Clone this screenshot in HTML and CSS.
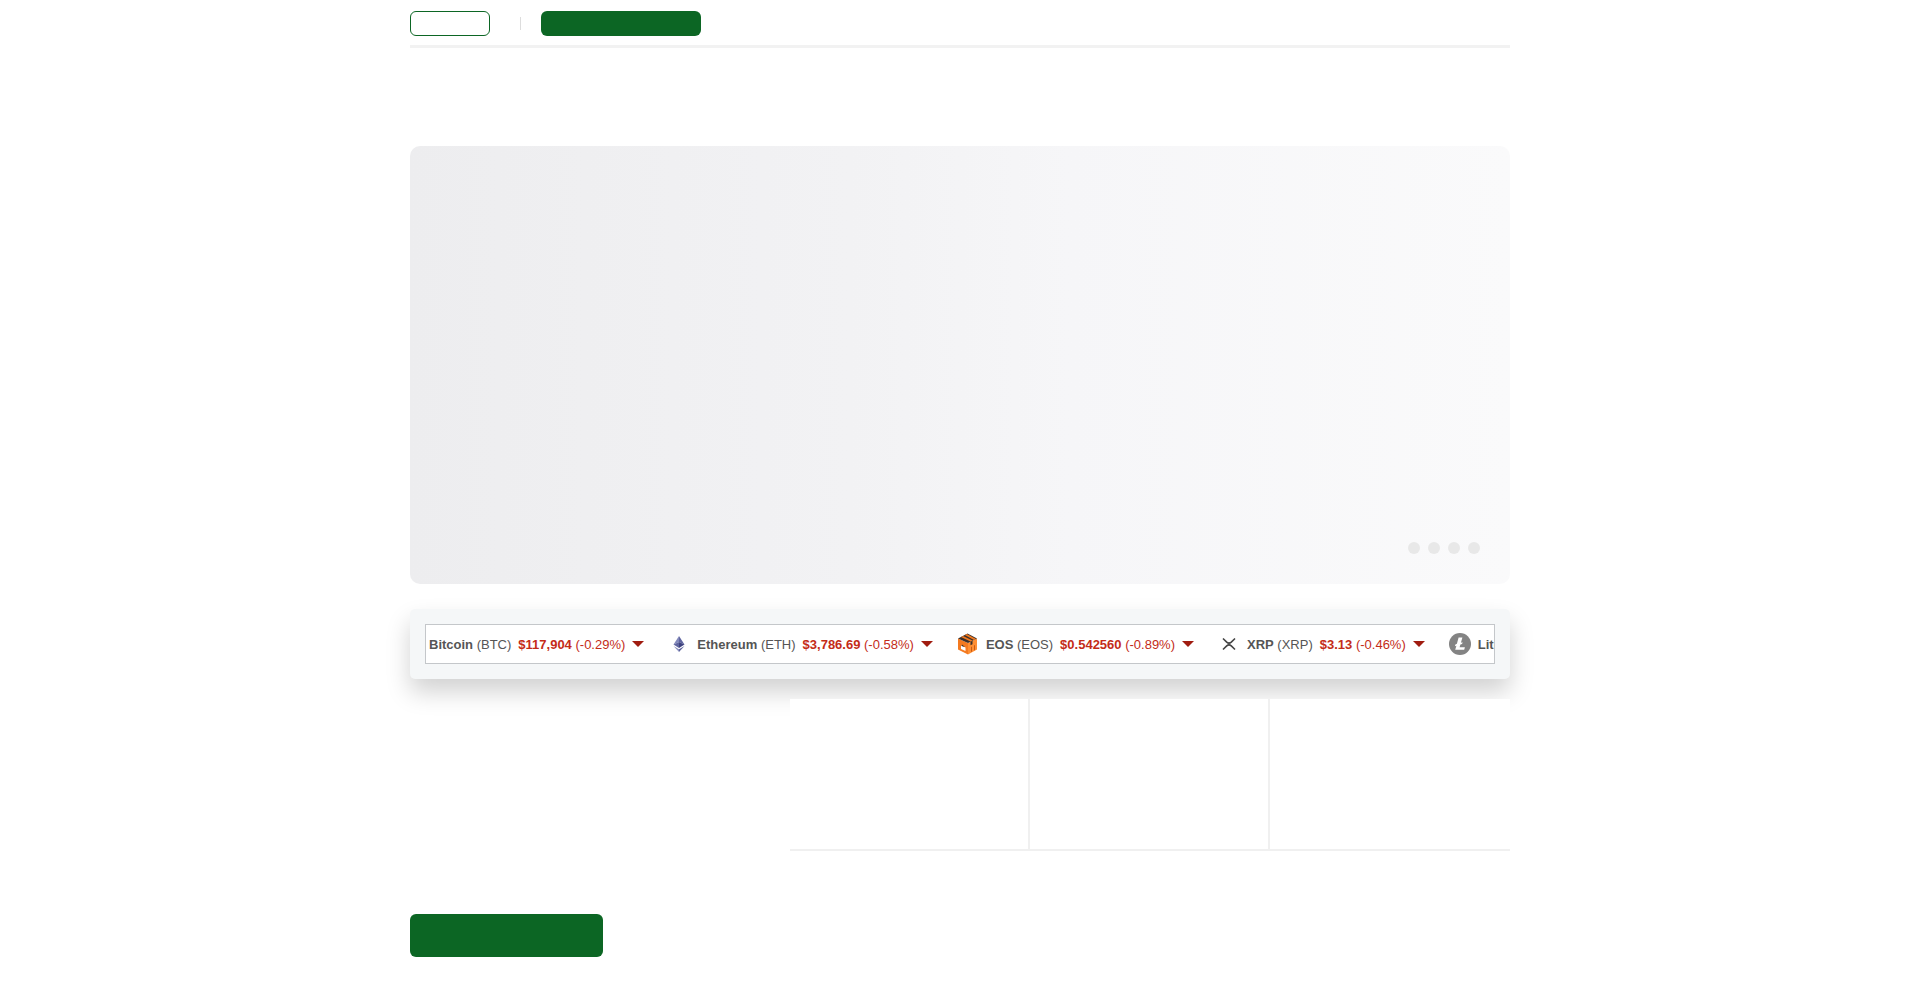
FILE: index.html
```html
<!DOCTYPE html>
<html lang="en">
<head>
  <meta charset="UTF-8">
  <meta name="viewport" content="width=device-width, initial-scale=1.0">
  <title>Crypto Market</title>
  <link rel="stylesheet" href="styles.css">
</head>
<body>
  <div class="container">
    <header class="header">
      <button class="btn btn-login" aria-label="Log in"></button>
      <span class="divider"></span>
      <button class="btn btn-signup" aria-label="Create account"></button>
    </header>

    <section class="hero">
      <div class="dots">
        <button class="dot" aria-label="Slide 1"></button>
        <button class="dot" aria-label="Slide 2"></button>
        <button class="dot" aria-label="Slide 3"></button>
        <button class="dot" aria-label="Slide 4"></button>
      </div>
    </section>

    <section class="ticker">
      <div class="ticker-track">
        <div class="coin">
          <span class="name"><b>Bitcoin</b> (BTC)</span>
          <span class="price"><b>$117,904</b> (-0.29%)</span>
          <span class="arrow"></span>
        </div>
        <div class="coin">
          <svg class="icon" viewBox="0 0 22 22">
            <path fill="#8288bb" d="M11 3 5.500 11.500 11 9z"/>
            <path fill="#5f659f" d="M11 3l5.500 8.500L11 9z"/>
            <path fill="#5f659f" d="M5.500 11.500 11 9v6z"/>
            <path fill="#3f4380" d="M16.500 11.500 11 9v6z"/>
            <path fill="#8a90bf" d="M5.500 13 11 16.200V19z"/>
            <path fill="#5c629b" d="M16.500 13 11 16.200V19z"/>
          </svg>
          <span class="name"><b>Ethereum</b> (ETH)</span>
          <span class="price"><b>$3,786.69</b> (-0.58%)</span>
          <span class="arrow"></span>
        </div>
        <div class="coin">
          <svg class="icon" viewBox="0 0 22 22">
            <path fill="#f47a20" d="M1 5.500 11 10v11.500L1 16.500z"/>
            <path fill="#ff8f33" d="M11 10l9-4.500v11l-9 5z"/>
            <path fill="#3d3029" d="M10.500.5l9.500 5L11 10 1 5.500z"/>
            <path fill="#f47a20" d="M4 4l2-1 9.500 4.600-2 1zM7.800 1.900l2-1L19 5.900l-2 1z"/>
            <path fill="#fff" d="M4 12.500l4.500 2V18L4 16z"/>
            <path fill="#3d3029" d="M5 11.500l3 2.500-3.500-1zM13.500 8.800l2-1v3.500l-2 1z"/>
            <path fill="#c95a12" d="M14 14l1-.5v5l-1 .5zM17 12.500l1-.5v5l-1 .5z"/>
          </svg>
          <span class="name"><b>EOS</b> (EOS)</span>
          <span class="price"><b>$0.542560</b> (-0.89%)</span>
          <span class="arrow"></span>
        </div>
        <div class="coin">
          <svg class="icon" viewBox="0 0 22 22" fill="none" stroke="#444" stroke-width="1.600">
            <path d="M5 5.500l3.700 3.600q2.300 2 4.600 0L17 5.500"/>
            <path d="M5 16.500l3.700-3.600q2.300-2 4.600 0l3.700 3.600"/>
          </svg>
          <span class="name"><b>XRP</b> (XRP)</span>
          <span class="price"><b>$3.13</b> (-0.46%)</span>
          <span class="arrow"></span>
        </div>
        <div class="coin">
          <svg class="icon" viewBox="0 0 22 22">
            <circle cx="11" cy="11" r="11" fill="#838383"/>
            <path fill="#fff" d="M9.600 4.500h3.800l-1.500 5.300 1.700-.6-.5 1.800-1.700.6-.8 2.700h5.300l-.7 2.500H6.200l1.200-4.100-1.500.5.500-1.800 1.500-.6z"/>
          </svg>
          <span class="name"><b>Litecoin</b> (LTC)</span>
        </div>
      </div>
    </section>

    <section class="cards">
      <div class="card"></div>
      <div class="card"></div>
      <div class="card"></div>
    </section>

    <button class="btn btn-start" aria-label="Get started"></button>
  </div>
</body>
</html>
```
FILE: styles.css
```css
* {
  box-sizing: border-box;
}

body {
  margin: 0;
  font-family: "Liberation Sans", Arial, sans-serif;
  font-size: 13px;
  background: #fff;
}

.container {
  max-width: 1100px;
  margin: 0 auto;
}

.header {
  display: flex;
  align-items: center;
  height: 48px;
  padding-top: 2px;
  border-bottom: 3px solid #f2f2f2;
}

.btn {
  display: block;
  padding: 0;
  border: none;
  border-radius: 6px;
  background: #0c6624;
  cursor: pointer;
}

.btn-login {
  width: 80px;
  height: 25px;
  border: 1px solid #0c6624;
  background: #fff;
}

.divider {
  width: 1px;
  height: 13px;
  margin: 0 20px 0 30px;
  background: #ddd;
}

.btn-signup {
  width: 160px;
  height: 25px;
}

.hero {
  display: flex;
  justify-content: flex-end;
  align-items: flex-end;
  height: 438px;
  margin-top: 98px;
  padding: 30px;
  border-radius: 10px;
  background: linear-gradient(to right, #ededef, #f2f2f4 40%, #f6f6f8 60%, #fafafb);
}

.dots {
  display: flex;
  gap: 8px;
}

.dot {
  width: 12px;
  height: 12px;
  padding: 0;
  border: none;
  border-radius: 50%;
  background: #e8e8e8;
  cursor: pointer;
}

.ticker {
  margin-top: 25px;
  padding: 15px;
  border-radius: 5px;
  background: #f5f7f8;
  box-shadow: 0 13px 25px rgba(0, 0, 0, 0.18);
}

.ticker-track {
  display: flex;
  align-items: center;
  gap: 24px;
  height: 40px;
  padding-left: 3px;
  border: 1px solid #c4c7ca;
  background: #fff;
  overflow: hidden;
  white-space: nowrap;
}

.coin {
  display: flex;
  flex-shrink: 0;
  align-items: center;
  gap: 7px;
}

.icon {
  width: 22px;
  height: 22px;
}

.name {
  color: #555;
}

.price {
  color: #c42b18;
}

.arrow {
  border: 6px solid transparent;
  border-top-color: #a01c10;
  border-bottom: none;
}

.cards {
  position: relative;
  display: grid;
  grid-template-columns: repeat(3, 1fr);
  width: 720px;
  max-width: 100%;
  margin: 20px 0 0 auto;
  border-bottom: 2px solid #f0f0f0;
  background: #fff;
}

.card {
  height: 150px;
  border-right: 2px solid #f0f0f0;
}

.card:last-child {
  border-right: none;
}

.btn-start {
  width: 193px;
  height: 43px;
  margin-top: 63px;
}
```
